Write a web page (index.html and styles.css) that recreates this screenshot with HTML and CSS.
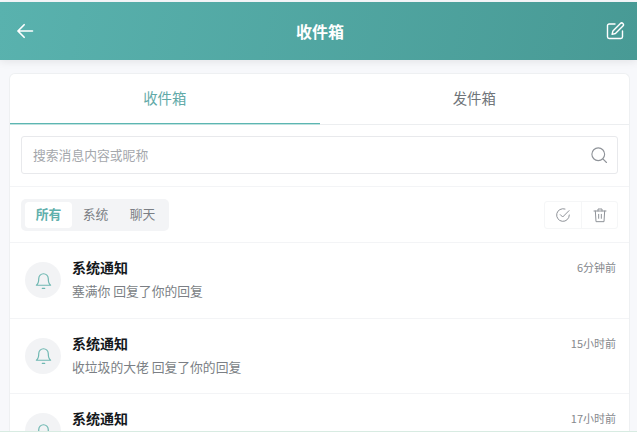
FILE: index.html
```html
<!DOCTYPE html>
<html lang="zh">
<head>
    <meta charset="UTF-8">
    <title>收件箱</title>
    <link rel="stylesheet" href="styles.css">
</head>
<body>
    <div class="app">
        <header class="topbar">
            <svg class="icon-white" width="20" height="20" viewBox="0 0 24 24"><path d="M21 12H4M11 4.500 3.500 12l7.500 7.500"/></svg>
            <h1>收件箱</h1>
            <svg class="icon-edit" width="20" height="20" viewBox="0 0 24 24"><path d="M12 3.500H5a2 2 0 0 0-2 2V19a2 2 0 0 0 2 2h14a2 2 0 0 0 2-2v-7"/><path d="M18.500 3a2 2 0 0 1 3 3L12.500 15l-4 1 1-4z"/></svg>
        </header>
        <main class="card">
            <div class="tabs">
                <div class="tab active">收件箱</div>
                <div class="tab">发件箱</div>
            </div>
            <div class="search-row">
                <div class="search">
                    <span>搜索消息内容或昵称</span>
                    <svg class="icon-grey" width="18" height="18" viewBox="0 0 24 24"><circle cx="11" cy="11" r="8.500"/><path d="m17.500 17.500 4.500 4.500"/></svg>
                </div>
            </div>
            <div class="filter-row">
                <div class="filters">
                    <div class="filter active">所有</div>
                    <div class="filter">系统</div>
                    <div class="filter">聊天</div>
                </div>
                <div class="actions">
                    <div class="action">
                        <svg class="icon-grey" width="16" height="16" viewBox="0 0 24 24"><path d="M21.500 12A9.500 9.500 0 1 1 15 3"/><path d="m8 11.500 3.500 3.500L21 5.500"/></svg>
                    </div>
                    <div class="action">
                        <svg class="icon-grey" width="16" height="16" viewBox="0 0 24 24"><path d="M3 6h18M9 6V3h6v3M5 6l1 16h12l1-16M10 11v6M14 11v6"/></svg>
                    </div>
                </div>
            </div>
            <div class="msg">
                <div class="avatar"><svg class="icon-teal" width="19" height="19" viewBox="0 0 24 24"><path d="M6 9.500a6 6 0 0 1 12 0c0 5 1 7 3 8.500H3c2-1.500 3-3.500 3-8.500z"/><path d="M10.500 22h3"/></svg></div>
                <div class="msg-body">
                    <div class="msg-head"><strong>系统通知</strong><time>6分钟前</time></div>
                    <p>塞满你 回复了你的回复</p>
                </div>
            </div>
            <div class="msg">
                <div class="avatar"><svg class="icon-teal" width="19" height="19" viewBox="0 0 24 24"><path d="M6 9.500a6 6 0 0 1 12 0c0 5 1 7 3 8.500H3c2-1.500 3-3.500 3-8.500z"/><path d="M10.500 22h3"/></svg></div>
                <div class="msg-body">
                    <div class="msg-head"><strong>系统通知</strong><time>15小时前</time></div>
                    <p>收垃圾的大佬 回复了你的回复</p>
                </div>
            </div>
            <div class="msg">
                <div class="avatar"><svg class="icon-teal" width="19" height="19" viewBox="0 0 24 24"><path d="M6 9.500a6 6 0 0 1 12 0c0 5 1 7 3 8.500H3c2-1.500 3-3.500 3-8.500z"/><path d="M10.500 22h3"/></svg></div>
                <div class="msg-body">
                    <div class="msg-head"><strong>系统通知</strong><time>17小时前</time></div>
                </div>
            </div>
        </main>
    </div>
    <div class="edge-line"></div>
</body>
</html>
```

FILE: styles.css
```css
html, body {
    margin: 0;
    height: 100%;
    overflow: hidden;
}

body {
    font-family: "Noto Sans CJK SC", "Liberation Sans", sans-serif;
    background: #f7f8fb;
}

svg {
    display: block;
    fill: none;
    stroke-linecap: round;
    stroke-linejoin: round;
}

.icon-white {
    stroke: #fff;
    stroke-width: 2;
}

.icon-edit {
    stroke: #fff;
    stroke-width: 1.700;
}

.icon-grey {
    stroke: #8f9399;
    stroke-width: 1.500;
}

.icon-teal {
    stroke: #6fb8b2;
    stroke-width: 1.500;
}

.topbar {
    height: 58px;
    margin-top: 2px;
    padding: 0 12px 0 15px;
    display: flex;
    justify-content: space-between;
    align-items: center;
    background: linear-gradient(100deg, #59b2ae, #489a95);
    box-shadow: 0 2px 8px rgba(0, 0, 0, 0.08);
}

.topbar h1 {
    margin: 0;
    font-size: 16px;
    line-height: 22px;
    font-weight: 700;
    color: #fff;
}

.card {
    margin: 13px 7px 0 9px;
    background: #fff;
    border: 1px solid #eef0f2;
    border-bottom: none;
    border-radius: 6px 6px 0 0;
}

.tabs {
    display: flex;
    border-bottom: 1px solid #eceef0;
}

.tab {
    flex: 1;
    height: 50px;
    box-sizing: border-box;
    line-height: 47px;
    text-align: center;
    font-size: 14.400px;
    color: #70757a;
}

.tab.active {
    color: #62aaa8;
    border-bottom: 1px solid #5cb6b2;
    box-shadow: 0 1px 0 #bfe2df;
}

.search-row {
    padding: 11px 11px 12px;
    border-bottom: 1px solid #f3f4f6;
}

.search {
    height: 38px;
    box-sizing: border-box;
    padding: 0 9px 2px 11px;
    display: flex;
    justify-content: space-between;
    align-items: center;
    border: 1px solid #e8e9ec;
    border-radius: 3px;
    font-size: 12.800px;
    color: #a4a7ac;
}

.search svg {
    margin-top: 2px;
}

.filter-row {
    height: 55px;
    padding: 0 11px;
    display: flex;
    justify-content: space-between;
    align-items: center;
    border-bottom: 1px solid #f3f4f6;
}

.filters {
    display: flex;
    padding: 3px 3px 3px 4px;
    background: #f3f4f6;
    border-radius: 5px;
}

.filter {
    width: 47px;
    height: 26px;
    line-height: 24px;
    text-align: center;
    font-size: 12.800px;
    color: #7b7f85;
}

.filter.active {
    background: #fff;
    border-radius: 4px;
    font-weight: 700;
    color: #5fb0ac;
}

.actions {
    display: flex;
    border: 1px solid #f5f6f7;
    border-radius: 3px;
}

.action {
    width: 36px;
    height: 26px;
    display: flex;
    justify-content: center;
    align-items: center;
}

.action + .action {
    width: 35px;
    border-left: 1px solid #f5f6f7;
}

.msg {
    height: 75.500px;
    box-sizing: border-box;
    padding: 14px 13px 0 15px;
    display: flex;
    align-items: flex-start;
    gap: 11px;
    border-bottom: 1px solid #f3f4f6;
}

.avatar {
    flex: none;
    width: 36px;
    height: 36px;
    margin-top: 5px;
    display: flex;
    justify-content: center;
    align-items: center;
    border-radius: 50%;
    background: #f2f3f5;
}

.msg-body {
    flex: 1;
}

.msg-head {
    height: 20px;
    display: flex;
    justify-content: space-between;
    align-items: center;
}

.msg-head strong {
    font-size: 14px;
    color: #15181c;
}

.msg-head time {
    font-size: 11px;
    color: #85888d;
}

.msg-body p {
    margin: 4px 0 0;
    line-height: 20px;
    font-size: 12.800px;
    color: #7b7f85;
}

/* thin line along the bottom of the window */
.edge-line {
    position: fixed;
    left: 0;
    right: 0;
    bottom: 0;
    height: 1px;
    background: #d8ebe2;
}
```
